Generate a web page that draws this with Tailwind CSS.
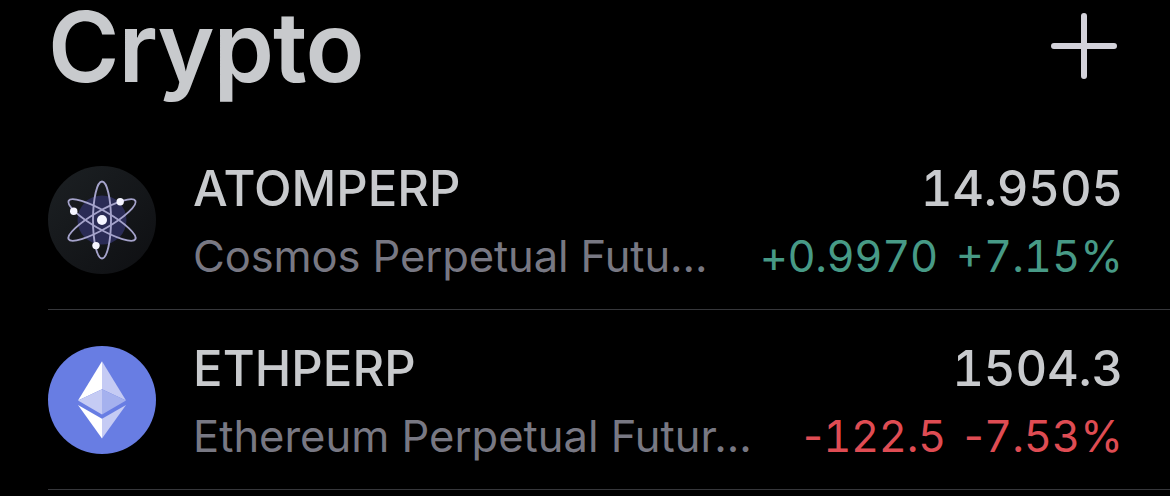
<!DOCTYPE html>
<html lang="en">
<head>
    <meta charset="UTF-8">
    <meta name="viewport" content="width=device-width, initial-scale=1.0">
    <title>Crypto Watchlist</title>
    <script src="https://cdn.jsdelivr.net/npm/@tailwindcss/browser@4"></script>
</head>
<body class="bg-black font-['Inter',sans-serif] overflow-hidden">
    <!-- Header -->
    <header class="flex justify-between items-start h-[130px] pl-12 pr-[53px]">
        <h1 class="text-[97px] leading-[93px] font-semibold tracking-[-1px] text-[#c8cacd]">Crypto</h1>
        <button class="mt-[13px]">
            <svg class="w-[66px] h-[66px]" viewBox="0 0 66 66" fill="none" stroke="#d3d2da" stroke-width="6" stroke-linecap="round">
                <path d="M33 3v60M3 33h60"/>
            </svg>
        </button>
    </header>

    <!-- Watchlist -->
    <main class="pl-12">
        <div class="flex items-start h-[180px] pt-9 pr-[47px] border-b border-[#36373b]">
            <svg class="w-[108px] h-[108px] shrink-0" viewBox="0 0 108 108" fill="none">
                <defs>
                    <linearGradient id="atomBg" x1="0" y1="0" x2="1" y2="1">
                        <stop offset="0" stop-color="#1c2023"/>
                        <stop offset="1" stop-color="#0e0f12"/>
                    </linearGradient>
                </defs>
                <circle cx="54" cy="54" r="54" fill="url(#atomBg)"/>
                <circle cx="54" cy="54" r="24.5" fill="#2a2b55"/>
                <g stroke="#a5a3cb" stroke-width="1.9">
                    <ellipse cx="54" cy="54" rx="9" ry="38.5"/>
                    <ellipse cx="54" cy="54" rx="9" ry="38.5" transform="rotate(60 54 54)"/>
                    <ellipse cx="54" cy="54" rx="9" ry="38.5" transform="rotate(-60 54 54)"/>
                </g>
                <g fill="#f5f5ff">
                    <circle cx="54" cy="54" r="5"/>
                    <circle cx="72.2" cy="35.7" r="3.7"/>
                    <circle cx="25.7" cy="45.2" r="3.7"/>
                    <circle cx="48" cy="79.6" r="3.7"/>
                </g>
            </svg>
            <div class="flex-1 -mt-[11px] ml-[37px] whitespace-nowrap">
                <div class="flex justify-between leading-[68px] text-[49px] font-medium text-[#c8cacd]">
                    <span>ATOMPERP</span>
                    <span class="tabular-nums tracking-[-0.2px]">14.9505</span>
                </div>
                <div class="flex justify-between leading-[66px] text-[43.5px]">
                    <span class="tracking-[-0.1px] text-[#787883]">Cosmos Perpetual Futu...</span>
                    <span class="flex gap-[18px] tabular-nums text-[#479a86]"><span class="tracking-[-0.4px]">+0.9970</span><span>+7.15%</span></span>
                </div>
            </div>
        </div>

        <div class="flex items-start h-[180px] pt-9 pr-[47px] border-b border-[#36373b]">
            <svg class="w-[108px] h-[108px] shrink-0" viewBox="0 0 108 108">
                <circle cx="54" cy="54" r="54" fill="#687de3"/>
                <path fill="#fff" d="M54 15.3V43.3L30 54.6z"/>
                <path fill="#c5cbf4" d="M54 15.3V43.3L78 54.6z"/>
                <path fill="#c5cbf4" d="M54 43.3V68.4L30 54.6z"/>
                <path fill="#a5b1ee" d="M54 43.3V68.4L78 54.6z"/>
                <path fill="#fff" d="M30 59L54 72.7V92.6z"/>
                <path fill="#c5cbf4" d="M78 59L54 72.7V92.6z"/>
            </svg>
            <div class="flex-1 -mt-[11px] ml-[37px] whitespace-nowrap">
                <div class="flex justify-between leading-[68px] text-[49px] font-medium text-[#c8cacd]">
                    <span class="tracking-[0.1px]">ETHPERP</span>
                    <span class="tabular-nums tracking-[-0.2px]">1504.3</span>
                </div>
                <div class="flex justify-between leading-[66px] text-[43.5px]">
                    <span class="text-[#787883]">Ethereum Perpetual Futur...</span>
                    <span class="flex gap-[14px] tabular-nums text-[#df4c53]"><span class="tracking-[-0.4px]"><span class="tracking-[-4px]">-</span>122.5</span><span><span class="tracking-[-4px]">-</span>7.53%</span></span>
                </div>
            </div>
        </div>
    </main>
</body>
</html>
